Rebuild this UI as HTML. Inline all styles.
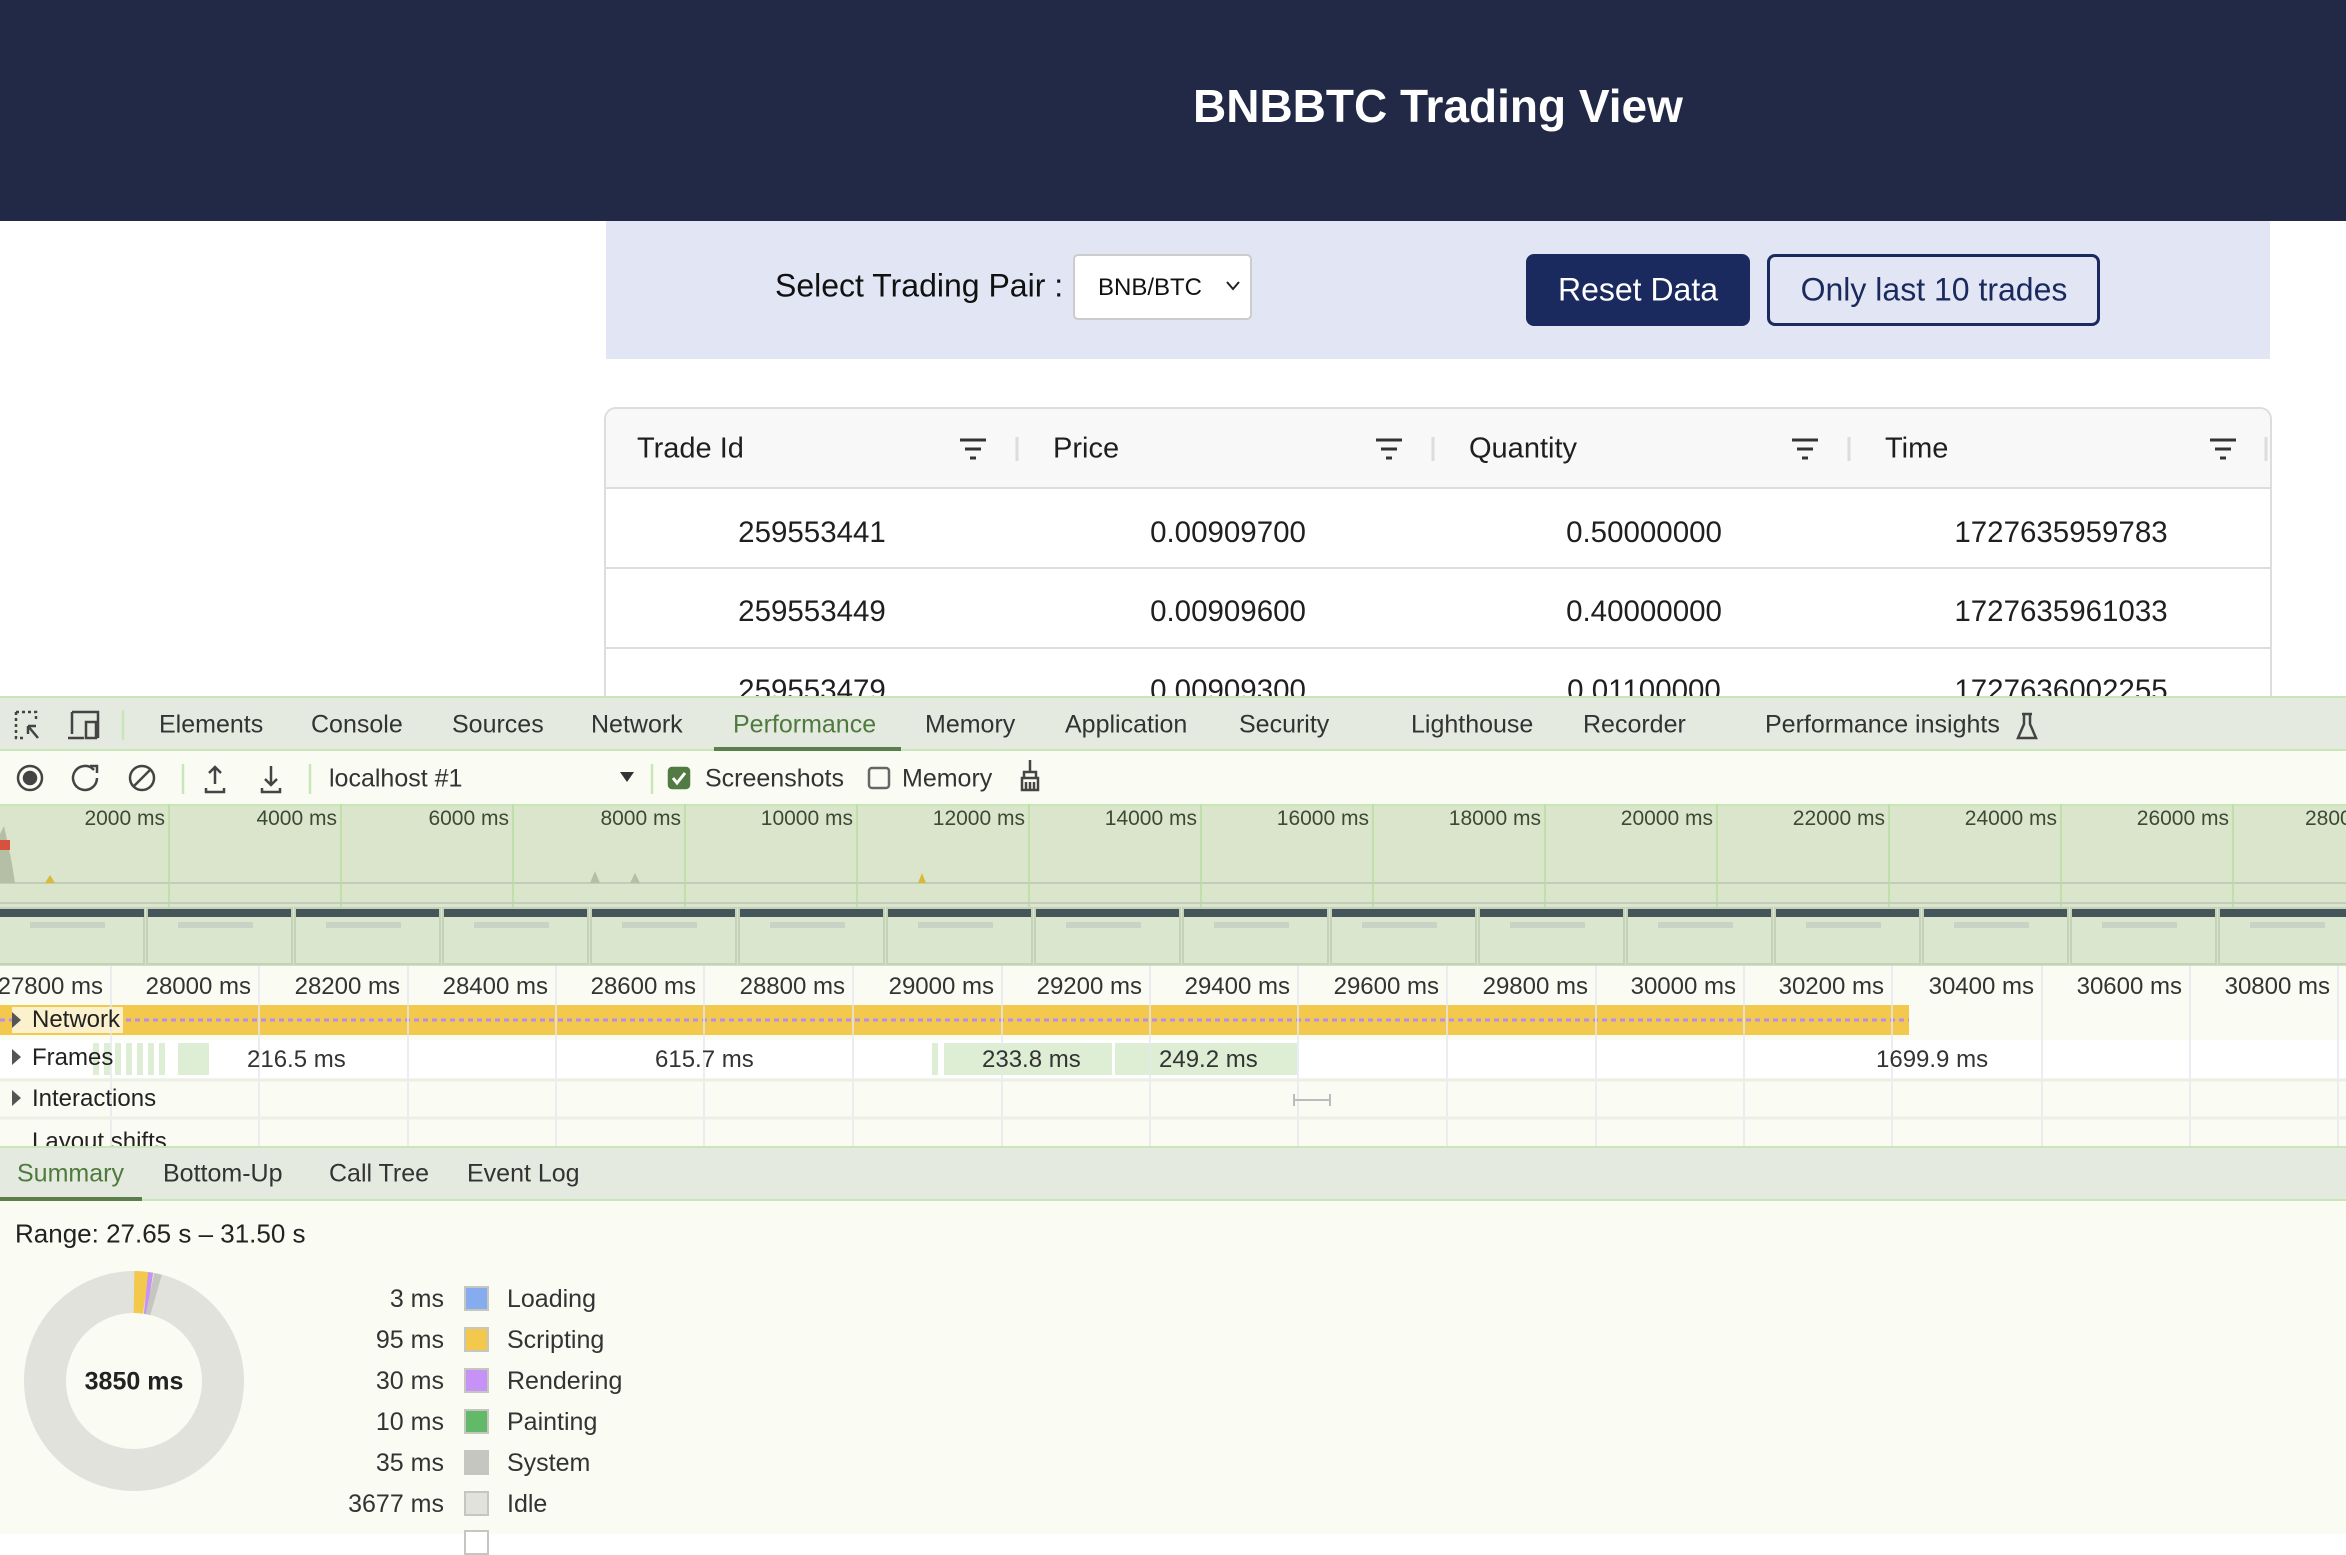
<!DOCTYPE html>
<html><head><meta charset="utf-8"><style>
*{margin:0;padding:0;box-sizing:border-box}
body{width:2346px;height:1534px;overflow:hidden;background:#fff;font-family:"Liberation Sans",sans-serif;position:relative;color:#1f1f1f}
.a{position:absolute;white-space:nowrap}
.t{font-size:24px;color:#333}
.tb{font-size:25px}
.ml{transform:translateY(-50%)}
.r{text-align:right}
.c{transform:translate(-50%,-50%)}
.d{font-size:29.5px}
</style></head><body>
<!-- header -->
<div class="a" style="left:0;top:0;width:2346px;height:221px;background:#212946"></div>
<div class="a" style="left:1193px;top:79px;font-size:46px;font-weight:bold;color:#fff">BNBBTC Trading View</div>
<!-- control bar -->
<div class="a" style="left:606px;top:221px;width:1664px;height:138px;background:#e1e5f4"></div>
<div class="a ml" style="left:775px;top:286px;font-size:32px;color:#111">Select Trading Pair :</div>
<div class="a" style="left:1073px;top:254px;width:179px;height:66px;background:#fff;border:2px solid #ccc;border-radius:5px"></div>
<div class="a ml" style="left:1098px;top:288px;font-size:24px;color:#111">BNB/BTC</div>
<svg class="a" style="left:1225px;top:280px" width="16" height="12"><path d="M2 2L8 9L14 2" fill="none" stroke="#222" stroke-width="2"/></svg>
<div class="a" style="left:1526px;top:254px;width:224px;height:72px;background:#1b2a5e;border-radius:8px"></div>
<div class="a c" style="left:1638px;top:290px;font-size:32px;color:#fff">Reset Data</div>
<div class="a" style="left:1767px;top:254px;width:333px;height:72px;border:3px solid #1b2a5e;border-radius:8px"></div>
<div class="a c" style="left:1934px;top:290px;font-size:32px;color:#1b2a5e">Only last 10 trades</div>
<!-- table -->
<div class="a" style="left:604px;top:407px;width:1668px;height:300px;border:2px solid #ddd;border-radius:12px;border-bottom:none;overflow:hidden">
 <div style="height:80px;background:#f8f8f8;border-bottom:2px solid #ddd"></div>
 <div style="height:80px;border-bottom:2px solid #ddd"></div>
 <div style="height:80px;border-bottom:2px solid #ddd"></div>
</div>
<div class="a ml" style="left:637px;top:449px;font-size:29px">Trade Id</div>
<div class="a ml" style="left:1053px;top:449px;font-size:29px">Price</div>
<div class="a ml" style="left:1469px;top:449px;font-size:29px">Quantity</div>
<div class="a ml" style="left:1885px;top:449px;font-size:29px">Time</div>
<svg class="a" style="left:0;top:0" width="2346" height="700">
<g stroke="#333" stroke-width="3">
<path d="M960 440h26M965 449h16M970 458h6"/><path d="M1376 440h26M1381 449h16M1386 458h6"/><path d="M1792 440h26M1797 449h16M1802 458h6"/><path d="M2210 440h26M2215 449h16M2220 458h6"/></g>
<g stroke="#ddd" stroke-width="3"><path d="M1017 437v24M1433 437v24M1849 437v24M2266 437v24"/></g></svg>
<div class="a c d" style="left:812px;top:533px">259553441</div>
<div class="a c d" style="left:1228px;top:533px">0.00909700</div>
<div class="a c d" style="left:1644px;top:533px">0.50000000</div>
<div class="a c d" style="left:2061px;top:533px">1727635959783</div>
<div class="a c d" style="left:812px;top:612px">259553449</div>
<div class="a c d" style="left:1228px;top:612px">0.00909600</div>
<div class="a c d" style="left:1644px;top:612px">0.40000000</div>
<div class="a c d" style="left:2061px;top:612px">1727635961033</div>
<div class="a c d" style="left:812px;top:691px">259553479</div>
<div class="a c d" style="left:1228px;top:691px">0.00909300</div>
<div class="a c d" style="left:1644px;top:691px">0.01100000</div>
<div class="a c d" style="left:2061px;top:691px">1727636002255</div>

<!-- devtools -->
<div class="a" style="left:0;top:696px;width:2346px;height:838px;background:#fafbf3"></div>
<div class="a" style="left:0;top:696px;width:2346px;height:55px;background:#e4eadf;border-top:2px solid #c8e6b8;border-bottom:2px solid #c8e6b8"></div>
<svg class="a" style="left:0;top:696px" width="2346" height="110" fill="none" stroke="#444" stroke-width="2.5">
<path d="M16 16h20v10M16 16v26h10" stroke-dasharray="3 3"/>
<path d="M28 30l10 12M28 30v8M28 30h8"/>
<path d="M72 16h26v26M72 16v22M68 42h16M86 26h10v16h-10z"/>
<path d="M123 14v30" stroke="#c8e6b8"/>
<circle cx="30" cy="82" r="12"/><circle cx="30" cy="82" r="6" fill="#444"/>
<path d="M94 74a12 12 0 1 0 3 8"/><path d="M90 70h7v7"/>
<circle cx="142" cy="82" r="12"/><path d="M134 90l16-16"/>
<path d="M183 68v30M310 68v30M652 68v30" stroke="#c8e6b8"/>
<path d="M215 88v-16M209 77l6-6 6 6M206 92v4h18v-4"/>
<path d="M271 70v18M265 83l6 6 6-6M262 92v4h18v-4"/>
<path d="M620 76h14l-7 10z" fill="#333" stroke="none"/>
<rect x="669" y="72" width="20" height="20" rx="3" fill="#527a43" stroke="#527a43"/><path d="M673 82l4 5 8-10" stroke="#fff" stroke-width="3"/>
<rect x="869" y="72" width="20" height="20" rx="3" stroke="#666"/>
<path d="M1030 64v12M1024 76h12v6h-12zM1022 82h16v12h-16zM1026 86v8M1030 86v8M1034 86v8"/>
<path d="M2022 18h10M2024 18v10l-6 14h18l-6-14v-10"/>
</svg>
<div class="a t tb ml" style="left:159px;top:725px">Elements</div>
<div class="a t tb ml" style="left:311px;top:725px">Console</div>
<div class="a t tb ml" style="left:452px;top:725px">Sources</div>
<div class="a t tb ml" style="left:591px;top:725px">Network</div>
<div class="a t tb ml" style="left:733px;top:725px;color:#4f7a3e">Performance</div>
<div class="a t tb ml" style="left:925px;top:725px">Memory</div>
<div class="a t tb ml" style="left:1065px;top:725px">Application</div>
<div class="a t tb ml" style="left:1239px;top:725px">Security</div>
<div class="a t tb ml" style="left:1411px;top:725px">Lighthouse</div>
<div class="a t tb ml" style="left:1583px;top:725px">Recorder</div>
<div class="a t tb ml" style="left:1765px;top:725px">Performance insights</div>
<div class="a" style="left:714px;top:747px;width:187px;height:4px;background:#5b7f4b"></div>
<div class="a t tb ml" style="left:329px;top:779px">localhost #1</div>
<div class="a t tb ml" style="left:705px;top:779px">Screenshots</div>
<div class="a t tb ml" style="left:902px;top:779px">Memory</div>

<!-- overview -->
<div class="a" style="left:0;top:804px;width:2346px;height:162px;background:#dae5cc;border-top:2px solid #c8e6b8;border-bottom:3px solid #c8e6b8"></div>
<svg class="a" style="left:0;top:804px" width="2346" height="162">
<g stroke="#bfe0a8" stroke-width="2"><path d="M169 0v104M341 0v104M513 0v104M685 0v104M857 0v104M1029 0v104M1201 0v104M1373 0v104M1545 0v104M1717 0v104M1889 0v104M2061 0v104M2233 0v104"/></g>
<path d="M0 79h2346M0 99h2346" stroke="#c2ccb8" stroke-width="2"/>
<path d="M0 79L0 30L4 22L8 40L12 60L15 79Z" fill="#b5bfa6"/>
<rect x="0" y="36" width="10" height="10" fill="#d5533c"/>
<path d="M45 79l5-8 5 8z" fill="#d8b93a"/>
<path d="M590 79l5-12 5 12zM630 79l5-10 5 10z" fill="#b5bfa6"/><path d="M918 79l4-10 4 10z" fill="#d8b93a"/>
<g fill="#dbe6cf" stroke="#c6d1bc" stroke-width="2">
<rect x="-3" y="104" width="147" height="56"/><rect x="147" y="104" width="145" height="56"/><rect x="295" y="104" width="145" height="56"/><rect x="443" y="104" width="145" height="56"/><rect x="591" y="104" width="145" height="56"/><rect x="739" y="104" width="145" height="56"/><rect x="887" y="104" width="145" height="56"/><rect x="1035" y="104" width="145" height="56"/><rect x="1183" y="104" width="145" height="56"/><rect x="1331" y="104" width="145" height="56"/><rect x="1479" y="104" width="145" height="56"/><rect x="1627" y="104" width="145" height="56"/><rect x="1775" y="104" width="145" height="56"/><rect x="1923" y="104" width="145" height="56"/><rect x="2071" y="104" width="145" height="56"/><rect x="2219" y="104" width="145" height="56"/></g>
<g fill="#45565a"><rect x="0" y="105" width="144" height="8"/><rect x="148" y="105" width="143" height="8"/><rect x="296" y="105" width="143" height="8"/><rect x="444" y="105" width="143" height="8"/><rect x="592" y="105" width="143" height="8"/><rect x="740" y="105" width="143" height="8"/><rect x="888" y="105" width="143" height="8"/><rect x="1036" y="105" width="143" height="8"/><rect x="1184" y="105" width="143" height="8"/><rect x="1332" y="105" width="143" height="8"/><rect x="1480" y="105" width="143" height="8"/><rect x="1628" y="105" width="143" height="8"/><rect x="1776" y="105" width="143" height="8"/><rect x="1924" y="105" width="143" height="8"/><rect x="2072" y="105" width="143" height="8"/><rect x="2220" y="105" width="143" height="8"/></g>
<g fill="#c8d3c6"><rect x="30" y="118" width="75" height="6"/><rect x="178" y="118" width="75" height="6"/><rect x="326" y="118" width="75" height="6"/><rect x="474" y="118" width="75" height="6"/><rect x="622" y="118" width="75" height="6"/><rect x="770" y="118" width="75" height="6"/><rect x="918" y="118" width="75" height="6"/><rect x="1066" y="118" width="75" height="6"/><rect x="1214" y="118" width="75" height="6"/><rect x="1362" y="118" width="75" height="6"/><rect x="1510" y="118" width="75" height="6"/><rect x="1658" y="118" width="75" height="6"/><rect x="1806" y="118" width="75" height="6"/><rect x="1954" y="118" width="75" height="6"/><rect x="2102" y="118" width="75" height="6"/><rect x="2250" y="118" width="75" height="6"/></g>
</svg>
<div class="a t r" style="right:2181px;top:807px;font-size:21px;color:#3c4a34">2000 ms</div>
<div class="a t r" style="right:2009px;top:807px;font-size:21px;color:#3c4a34">4000 ms</div>
<div class="a t r" style="right:1837px;top:807px;font-size:21px;color:#3c4a34">6000 ms</div>
<div class="a t r" style="right:1665px;top:807px;font-size:21px;color:#3c4a34">8000 ms</div>
<div class="a t r" style="right:1493px;top:807px;font-size:21px;color:#3c4a34">10000 ms</div>
<div class="a t r" style="right:1321px;top:807px;font-size:21px;color:#3c4a34">12000 ms</div>
<div class="a t r" style="right:1149px;top:807px;font-size:21px;color:#3c4a34">14000 ms</div>
<div class="a t r" style="right:977px;top:807px;font-size:21px;color:#3c4a34">16000 ms</div>
<div class="a t r" style="right:805px;top:807px;font-size:21px;color:#3c4a34">18000 ms</div>
<div class="a t r" style="right:633px;top:807px;font-size:21px;color:#3c4a34">20000 ms</div>
<div class="a t r" style="right:461px;top:807px;font-size:21px;color:#3c4a34">22000 ms</div>
<div class="a t r" style="right:289px;top:807px;font-size:21px;color:#3c4a34">24000 ms</div>
<div class="a t r" style="right:117px;top:807px;font-size:21px;color:#3c4a34">26000 ms</div>
<div class="a t" style="left:2305px;top:807px;font-size:21px;color:#3c4a34">28000 ms</div>

<!-- timeline -->
<svg class="a" style="left:0;top:966px" width="2346" height="182">
<rect x="0" y="74" width="2346" height="38" fill="#fff"/>
<rect x="0" y="39" width="1909" height="30" fill="#f2c94c"/>
<path d="M0 54H1909" stroke="#b88cf0" stroke-width="3" stroke-dasharray="5 4"/>
<rect x="12" y="41" width="111" height="26" fill="#fbf1cc"/>
<g fill="#ddeed4"><rect x="93" y="77" width="6" height="32"/><rect x="104" y="77" width="6" height="32"/><rect x="115" y="77" width="6" height="32"/><rect x="126" y="77" width="6" height="32"/><rect x="137" y="77" width="6" height="32"/><rect x="148" y="77" width="6" height="32"/><rect x="159" y="77" width="6" height="32"/><rect x="178" y="77" width="31" height="32"/><rect x="932" y="77" width="6" height="32"/><rect x="944" y="77" width="168" height="32"/><rect x="1115" y="77" width="182" height="32"/></g>
<g stroke="#e4e8ef" stroke-width="1.5"><path d="M111 0v182M259 0v182M408 0v182M556 0v182M704 0v182M853 0v182M1002 0v182M1150 0v182M1298 0v182M1447 0v182M1596 0v182M1744 0v182M1892 0v182M2042 0v182M2190 0v182M2338 0v182"/></g>
<path d="M0 114h2346M0 152h2346" stroke="#ecefe6" stroke-width="3"/>
<path d="M1294 134h36M1294 128v12M1330 128v12" stroke="#bbb" stroke-width="2"/>
<g fill="#555"><path d="M12 46l9 8-9 8zM12 83l9 8-9 8zM12 124l9 8-9 8z"/></g>
</svg>
<div class="a t r" style="right:2243px;top:973px">27800 ms</div>
<div class="a t r" style="right:2095px;top:973px">28000 ms</div>
<div class="a t r" style="right:1946px;top:973px">28200 ms</div>
<div class="a t r" style="right:1798px;top:973px">28400 ms</div>
<div class="a t r" style="right:1650px;top:973px">28600 ms</div>
<div class="a t r" style="right:1501px;top:973px">28800 ms</div>
<div class="a t r" style="right:1352px;top:973px">29000 ms</div>
<div class="a t r" style="right:1204px;top:973px">29200 ms</div>
<div class="a t r" style="right:1056px;top:973px">29400 ms</div>
<div class="a t r" style="right:907px;top:973px">29600 ms</div>
<div class="a t r" style="right:758px;top:973px">29800 ms</div>
<div class="a t r" style="right:610px;top:973px">30000 ms</div>
<div class="a t r" style="right:462px;top:973px">30200 ms</div>
<div class="a t r" style="right:312px;top:973px">30400 ms</div>
<div class="a t r" style="right:164px;top:973px">30600 ms</div>
<div class="a t r" style="right:16px;top:973px">30800 ms</div>
<div class="a t ml" style="left:32px;top:1020px;color:#222">Network</div>
<div class="a t ml" style="left:32px;top:1058px;color:#222">Frames</div>
<div class="a t ml" style="left:247px;top:1060px">216.5 ms</div>
<div class="a t ml" style="left:655px;top:1060px">615.7 ms</div>
<div class="a t ml" style="left:982px;top:1060px">233.8 ms</div>
<div class="a t ml" style="left:1159px;top:1060px">249.2 ms</div>
<div class="a t ml" style="left:1876px;top:1060px">1699.9 ms</div>
<div class="a t ml" style="left:32px;top:1099px;color:#222">Interactions</div>
<div class="a" style="left:0;top:1118px;width:2346px;height:28px;overflow:hidden"><div class="a t" style="left:32px;top:10px;color:#222">Layout shifts</div></div>

<!-- summary -->
<div class="a" style="left:0;top:1146px;width:2346px;height:55px;background:#e4eadf;border-top:2px solid #c8e6b8;border-bottom:2px solid #c8e6b8"></div>
<div class="a" style="left:0;top:1197px;width:142px;height:4px;background:#5b7f4b"></div>
<div class="a t tb ml" style="left:17px;top:1174px;color:#4f7a3e">Summary</div>
<div class="a t tb ml" style="left:163px;top:1174px">Bottom-Up</div>
<div class="a t tb ml" style="left:329px;top:1174px">Call Tree</div>
<div class="a t tb ml" style="left:467px;top:1174px">Event Log</div>
<div class="a ml" style="left:15px;top:1234px;font-size:26px;color:#222">Range: 27.65 s – 31.50 s</div>
<svg class="a" style="left:0;top:1260px" width="300" height="250">
<circle cx="134" cy="121" r="89" fill="none" stroke="#e2e2dc" stroke-width="42"/>
<path d="M134 32A89 89 0 0 1 146 33" fill="none" stroke="#f2c94c" stroke-width="42"/>
<path d="M146 33A89 89 0 0 1 150 33.5" fill="none" stroke="#c792f5" stroke-width="42"/>
<path d="M150 33.5A89 89 0 0 1 156 35" fill="none" stroke="#c4c6bf" stroke-width="42"/>
</svg>
<div class="a c" style="left:134px;top:1382px;font-size:25px;font-weight:bold;color:#222">3850 ms</div>
<div class="a t tb r" style="right:1902px;top:1285px">3 ms</div>
<div class="a t tb r" style="right:1902px;top:1326px">95 ms</div>
<div class="a t tb r" style="right:1902px;top:1367px">30 ms</div>
<div class="a t tb r" style="right:1902px;top:1408px">10 ms</div>
<div class="a t tb r" style="right:1902px;top:1449px">35 ms</div>
<div class="a t tb r" style="right:1902px;top:1490px">3677 ms</div>
<div class="a" style="left:464px;top:1286px;width:25px;height:25px;background:#87abef;border:2px solid #c4c6bf"></div>
<div class="a" style="left:464px;top:1327px;width:25px;height:25px;background:#f2c94c;border:2px solid #c4c6bf"></div>
<div class="a" style="left:464px;top:1368px;width:25px;height:25px;background:#c792f5;border:2px solid #c4c6bf"></div>
<div class="a" style="left:464px;top:1409px;width:25px;height:25px;background:#62b968;border:2px solid #c4c6bf"></div>
<div class="a" style="left:464px;top:1450px;width:25px;height:25px;background:#c4c6bf;border:2px solid #c4c6bf"></div>
<div class="a" style="left:464px;top:1491px;width:25px;height:25px;background:#e2e2dc;border:2px solid #c4c6bf"></div>
<div class="a" style="left:464px;top:1530px;width:25px;height:25px;background:#fff;border:2px solid #c4c6bf"></div>
<div class="a t tb" style="left:507px;top:1285px">Loading</div>
<div class="a t tb" style="left:507px;top:1326px">Scripting</div>
<div class="a t tb" style="left:507px;top:1367px">Rendering</div>
<div class="a t tb" style="left:507px;top:1408px">Painting</div>
<div class="a t tb" style="left:507px;top:1449px">System</div>
<div class="a t tb" style="left:507px;top:1490px">Idle</div>
</body></html>
